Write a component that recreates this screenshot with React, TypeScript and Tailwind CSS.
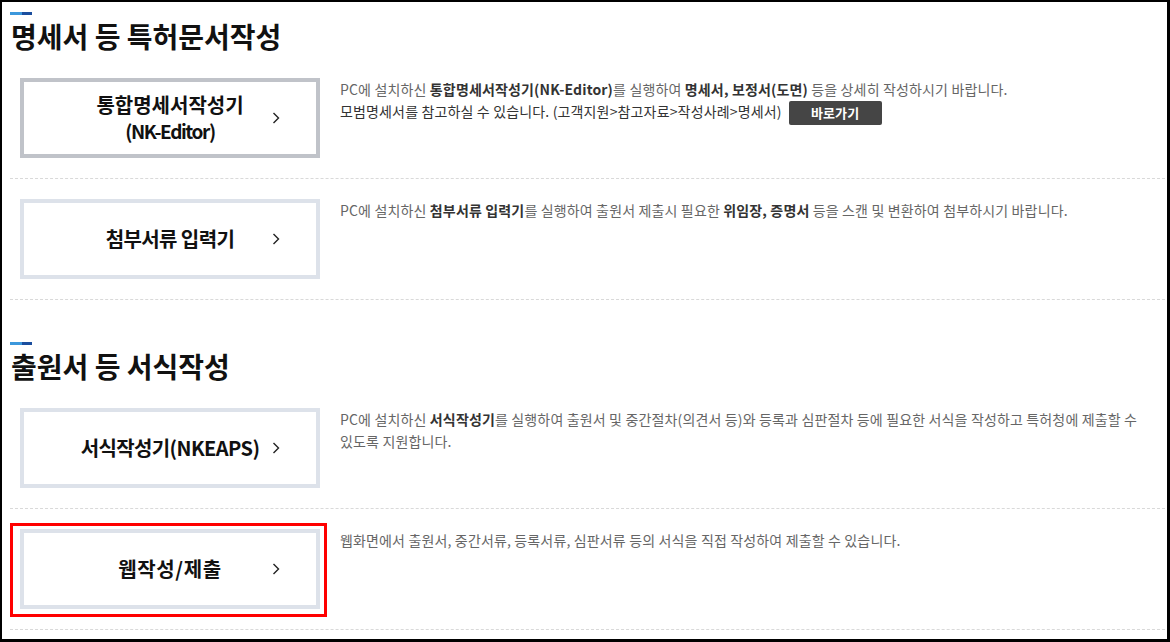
const FONT = "font-['Noto_Sans_CJK_KR','Noto_Sans',sans-serif]";

function Chevron() {
  return (
    <svg
      width="8"
      height="13"
      viewBox="0 0 8 13"
      className="absolute right-[36px] top-1/2 -translate-y-1/2"
    >
      <path d="M1.5 1.5 L6.5 6.5 L1.5 11.5" fill="none" stroke="#222" strokeWidth="1.4" />
    </svg>
  );
}

function SectionTitle({ children }: { children: React.ReactNode }) {
  return (
    <div>
      <div className="flex h-[3px] w-[22px]">
        <div className="w-[12px] bg-[#3c98dc]" />
        <div className="w-[10px] bg-[#1b4e9e]" />
      </div>
      <h2 className="mt-[2px] pl-[1px] text-[28px] leading-[38px] font-bold text-[#111]">
        {children}
      </h2>
    </div>
  );
}

function Row({
  label,
  desc,
  dark,
  highlight,
}: {
  label: React.ReactNode;
  desc: React.ReactNode;
  dark?: boolean;
  highlight?: boolean;
}) {
  return (
    <div className="flex border-b border-dashed border-[#d9d9d9] py-[20px] pl-[10px]">
      <div className="relative shrink-0">
        {highlight && (
          <div className="absolute -left-[10px] -top-[6px] h-[94px] w-[317px] border-[3px] border-[#ff0000]" />
        )}
        <div
          className={
            "relative flex h-[80px] w-[300px] items-center justify-center border-4 bg-white " +
            (dark ? "border-[#c0c3c9]" : "border-[#dde2ea]")
          }
        >
          <div className="text-center text-[20px] leading-[26px] font-bold text-[#111]">{label}</div>
          <Chevron />
        </div>
      </div>
      <div className="ml-[20px] pr-[6px] text-[14px] leading-[22px] tracking-[0.15px] break-keep text-[#666]">
        {desc}
      </div>
    </div>
  );
}

const B = ({ children }: { children: React.ReactNode }) => (
  <b className="font-bold text-[#333]">{children}</b>
);

export default function App() {
  return (
    <div
      className={
        FONT +
        " h-[642px] w-[1170px] overflow-hidden border-2 border-r-[3px] border-b-[3px] border-black bg-white pt-[10px] pr-[2px] pl-[8px]"
      }
    >
      <SectionTitle>명세서 등 특허문서작성</SectionTitle>
      <div className="mt-[3px]">
        <Row
          dark
          label={
            <>
              <span>통합명세서작성기</span>
              <br />
              <span className="text-[19px] tracking-[-1.4px]">(NK-Editor)</span>
            </>
          }
          desc={
            <>
              PC에 설치하신 <B>통합명세서작성기(NK-Editor)</B>를 실행하여 <B>명세서, 보정서(도면)</B> 등을
              상세히 작성하시기 바랍니다.
              <br />
              <span className="text-[#333]">
                모범명세서를 참고하실 수 있습니다. (고객지원&gt;참고자료&gt;작성사례&gt;명세서)
              </span>
              <span className="ml-[7px] inline-block h-[24px] w-[93px] rounded-[2px] bg-[#454545] text-center align-middle text-[13px] leading-[24px] font-bold text-white">
                바로가기
              </span>
            </>
          }
        />
        <Row
          label={<span className="tracking-[-0.6px]">첨부서류 입력기</span>}
          desc={
            <>
              PC에 설치하신 <B>첨부서류 입력기</B>를 실행하여 출원서 제출시 필요한 <B>위임장, 증명서</B> 등을
              스캔 및 변환하여 첨부하시기 바랍니다.
            </>
          }
        />
      </div>
      <div className="mt-[42px]">
        <SectionTitle>출원서 등 서식작성</SectionTitle>
      </div>
      <div className="mt-[3px]">
        <Row
          label={<span className="tracking-[-0.6px]">서식작성기(NKEAPS)</span>}
          desc={
            <>
              PC에 설치하신 <B>서식작성기</B>를 실행하여 출원서 및 중간절차(의견서 등)와 등록과 심판절차 등에
              필요한 서식을 작성하고 특허청에 제출할 수 있도록 지원합니다.
            </>
          }
        />
        <Row
          highlight
          label={<span className="tracking-[0.6px]">웹작성/제출</span>}
          desc={<>웹화면에서 출원서, 중간서류, 등록서류, 심판서류 등의 서식을 직접 작성하여 제출할 수 있습니다.</>}
        />
      </div>
    </div>
  );
}
